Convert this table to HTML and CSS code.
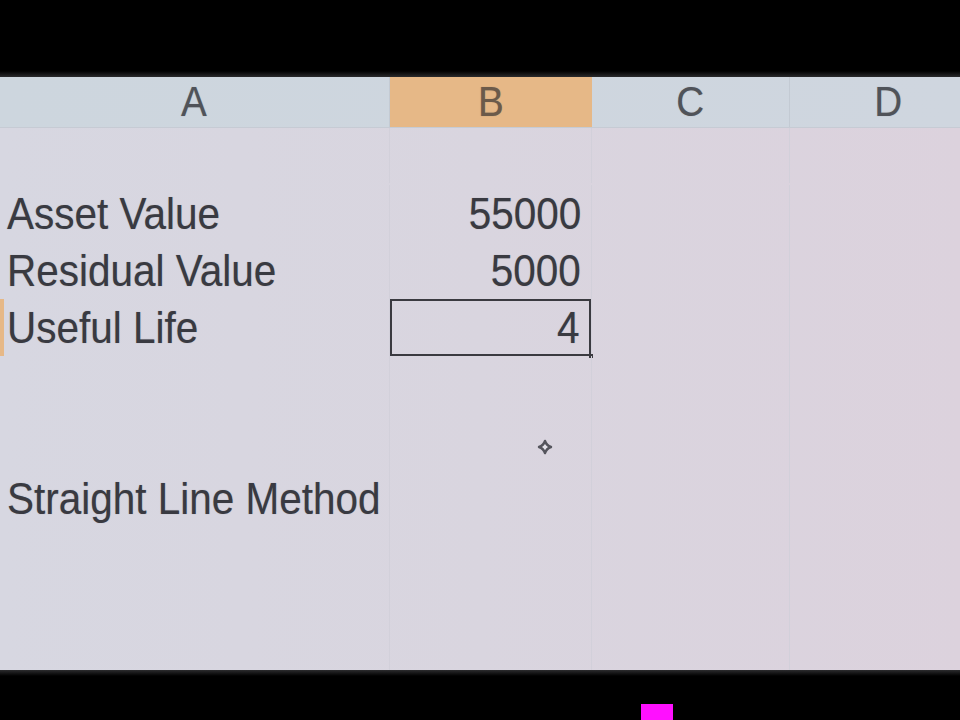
FILE: index.html
```html
<!DOCTYPE html>
<html>
<head>
<meta charset="utf-8">
<link rel="stylesheet" href="styles.css">
</head>
<body>
<div class="screen">
  <div class="band-top"></div>
  <div class="sheet">
    <div class="head-row">
      <div class="hcell"><span class="t">A</span></div>
      <div class="hcell sel"><span class="t">B</span></div>
      <div class="hcell"><span class="t">C</span></div>
      <div class="hcell last"><span class="t">D</span></div>
    </div>
    <div class="grid">
      <div class="cell spacer"></div><div class="cell b spacer"></div><div class="cell c spacer"></div><div class="cell d spacer"></div>

      <div class="cell"><span class="t">Asset Value</span></div>
      <div class="cell b num"><span class="t r">55000</span></div>
      <div class="cell c"></div><div class="cell d"></div>

      <div class="cell"><span class="t">Residual Value</span></div>
      <div class="cell b num"><span class="t r">5000</span></div>
      <div class="cell c"></div><div class="cell d"></div>

      <div class="cell rowsel"><span class="t">Useful Life</span></div>
      <div class="cell b num active"><span class="t r">4</span><i class="handle"></i></div>
      <div class="cell c"></div><div class="cell d"></div>

      <div class="cell"></div><div class="cell b"></div><div class="cell c"></div><div class="cell d"></div>

      <div class="cell"></div><div class="cell b"></div><div class="cell c"></div><div class="cell d"></div>

      <div class="cell"><span class="t">Straight Line Method</span></div>
      <div class="cell b"></div><div class="cell c"></div><div class="cell d"></div>

      <div class="cell"></div><div class="cell b"></div><div class="cell c"></div><div class="cell d"></div>

      <div class="cell"></div><div class="cell b"></div><div class="cell c"></div><div class="cell d"></div>

      <div class="cell"></div><div class="cell b"></div><div class="cell c"></div><div class="cell d"></div>
    </div>
    <svg class="cursor" width="20" height="20" viewBox="0 0 20 20">
      <path d="M10 4 Q11.5 8.5 16 10 Q11.5 11.5 10 16 Q8.5 11.5 4 10 Q8.5 8.5 10 4 Z" fill="#e4e2ea" stroke="#55555d" stroke-width="2.4" stroke-linejoin="round"/>
    </svg>
  </div>
  <div class="band-bottom"><div class="mark"></div></div>
</div>
</body>
</html>
```
FILE: styles.css
```css
html, body {
  margin: 0;
  padding: 0;
  background: #000;
}
.screen {
  width: 960px;
  height: 720px;
  display: flex;
  flex-direction: column;
  overflow: hidden;
  font-family: "Liberation Sans", Arial, sans-serif;
}
.band-top {
  height: 77px;
  flex: none;
  background: linear-gradient(#000 0, #000 71px, #2a2a2c 77px);
}
.sheet {
  position: relative;
  height: 593px;
  flex: none;
  background: linear-gradient(90deg, #d7d7e1 0%, #d9d5df 50%, #dcd2dd 100%);
  overflow: hidden;
}
.head-row {
  display: grid;
  grid-template-columns: 390px 202px 198px 1fr;
  height: 50px;
  background: linear-gradient(90deg, #cdd6de, #cfd6df);
  border-bottom: 1px solid #c6cbd4;
}
.hcell {
  display: flex;
  align-items: center;
  justify-content: center;
  color: #505359;
  font-size: 42px;
  border-right: 1px solid #c3cad3;
}
.hcell.last { border-right: none; justify-content: flex-start; padding-left: 83px; }
.hcell.sel {
  background: #e6b887;
  color: #6b5a4a;
  border-right: none;
}
.t {
  display: inline-block;
  transform: scaleX(0.92);
  transform-origin: center;
  white-space: nowrap;
  text-shadow: 0 0 1px rgba(40, 40, 48, 0.35);
}
.grid {
  display: grid;
  grid-template-columns: 390px 202px 198px 1fr;
  grid-auto-rows: 57px;
}
.cell {
  position: relative;
  display: flex;
  align-items: center;
  padding-left: 7px;
  color: #393a41;
  font-size: 44px;
  border-right: 1px solid #d2d0da;
}
.cell .t { transform-origin: left center; }
.cell.spacer { height: 55px; }
.cell.d { border-right: none; }
.cell.num {
  justify-content: flex-end;
  padding-left: 0;
  padding-right: 10px;
}
.cell .t.r { transform-origin: right center; }
.cell.active {
  box-shadow: inset 0 0 0 2px #3a3a40;
  padding-right: 12px;
}
.handle {
  position: absolute;
  right: -2px;
  bottom: -2px;
  width: 4px;
  height: 4px;
  background: #3a3a40;
}
.rowsel::before {
  content: "";
  position: absolute;
  left: 0;
  top: 0;
  bottom: 0;
  width: 4px;
  background: #e6b887;
}
.cursor {
  position: absolute;
  left: 535px;
  top: 360px;
}
.band-bottom {
  flex: 1;
  background: linear-gradient(#2c2c2e 0, #000 6px);
  position: relative;
}
.mark {
  width: 32px;
  height: 16px;
  margin-left: 641px;
  margin-top: 34px;
  background: #ff10ff;
}
```
